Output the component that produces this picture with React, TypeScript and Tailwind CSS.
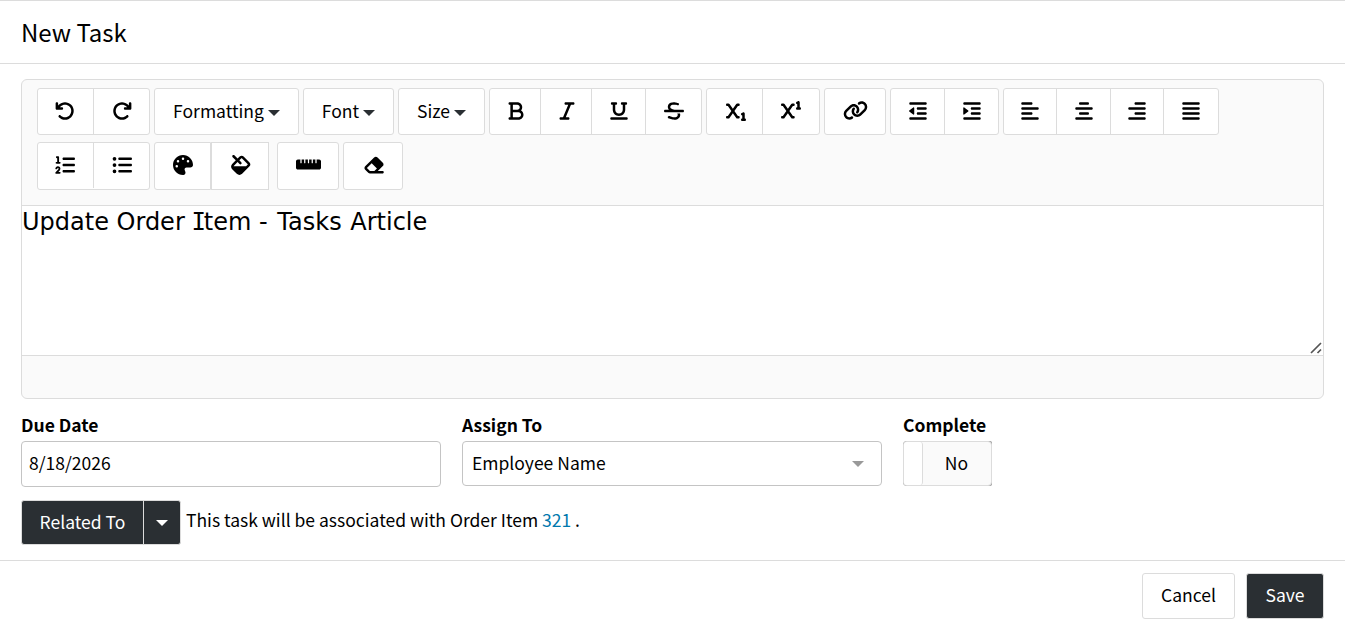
import { ReactNode } from 'react';
import {
  FaArrowRotateLeft, FaArrowRotateRight, FaBold, FaItalic, FaUnderline, FaStrikethrough, FaSubscript, FaSuperscript,
  FaLink, FaOutdent, FaIndent, FaAlignLeft, FaAlignCenter, FaAlignRight, FaAlignJustify, FaListOl, FaListUl,
  FaPalette, FaFill, FaRulerHorizontal, FaEraser,
} from 'react-icons/fa6';

function Caret({ className = 'text-[#2a2f33]' }: { className?: string }) {
  return (
    <svg viewBox="0 0 12 6" className={`h-[6px] w-[12px] shrink-0 ${className}`}>
      <path d="M0 0H12L6 6Z" fill="currentColor" />
    </svg>
  );
}

function Group({ children, className = '' }: { children: ReactNode; className?: string }) {
  return <div className={`flex divide-x divide-[#dcdcdc] overflow-hidden rounded-[3px] border border-[#dcdcdc] bg-white ${className}`}>{children}</div>;
}

function Btn({ w, children, className = '' }: { w: string; children: ReactNode; className?: string }) {
  return <button className={`flex shrink-0 items-center justify-center pb-[2px] ${w} ${className}`}>{children}</button>;
}

function MenuBtn({ label }: { label: string }) {
  return (
    <Btn w="w-full" className="gap-[4px]">
      {label}
      <Caret className="mt-[4px] text-[#2a2f33]" />
    </Btn>
  );
}

export default function App() {
  return (
    <div className="flex h-[628px] w-full flex-col bg-white font-['Noto_Sans_CJK_SC',sans-serif] text-[17.5px] leading-[24px] text-black">
      <header className="flex h-[64px] items-center border-y border-[#dcdcdc] px-[21px] pb-px text-[24px]">New Task</header>
      <main className="h-[496px] px-[21px] pt-[15px]">
        <section className="h-[320px] overflow-hidden rounded-[6px] border border-[#dcdcdc] bg-[#fafafa]">
          <div className="h-[125px] px-[15px] pt-[8px]">
            <div className="flex h-[47px] gap-[4px]">
              <Group className="w-[113px]"><Btn w="w-[56px]" className="pr-px"><FaArrowRotateLeft size={20} /></Btn><Btn w="w-[56px]" className="pr-px"><FaArrowRotateRight size={20} /></Btn></Group>
              <Group className="w-[145px]"><MenuBtn label="Formatting" /></Group>
              <Group className="w-[91px]"><MenuBtn label="Font" /></Group>
              <Group className="w-[87px]"><MenuBtn label="Size" /></Group>
              <Group className="w-[213px]"><Btn w="w-[51px]" className="pl-px"><FaBold size={20} /></Btn><Btn w="w-[51px]" className="pl-px"><FaItalic size={20} /></Btn><Btn w="w-[54px]" className="pl-px"><FaUnderline size={20} /></Btn><Btn w="w-[55px]"><FaStrikethrough size={20} /></Btn></Group>
              <Group className="w-[114px]"><Btn w="w-[56px]" className="pl-[2px]"><FaSubscript size={20} /></Btn><Btn w="w-[57px]" className="pr-px"><FaSuperscript size={20} /></Btn></Group>
              <Group className="w-[62px]"><Btn w="w-[60px]"><FaLink size={25} /></Btn></Group>
              <Group className="w-[109px]"><Btn w="w-[54px]" className="pl-px"><FaOutdent size={20} /></Btn><Btn w="w-[53px]"><FaIndent size={20} /></Btn></Group>
              <Group className="w-[216px]"><Btn w="w-[53px]"><FaAlignLeft size={20} /></Btn><Btn w="w-[54px]"><FaAlignCenter size={20} /></Btn><Btn w="w-[53px]"><FaAlignRight size={20} /></Btn><Btn w="w-[54px]"><FaAlignJustify size={20} /></Btn></Group>
            </div>
            <div className="mt-[7px] flex h-[48px]">
              <Group className="mr-[4px] w-[113px] pb-px"><Btn w="w-[56px]" className="pr-px"><FaListOl size={20} /></Btn><Btn w="w-[56px]" className="pr-px"><FaListUl size={20} /></Btn></Group>
              <Group className="w-[57px] rounded-r-none pb-px"><Btn w="w-[55px]"><FaPalette size={20} /></Btn></Group>
              <Group className="mr-[8px] w-[58px] rounded-none pb-px"><Btn w="w-[56px]" className="pl-px"><FaFill size={20} /></Btn></Group>
              <Group className="mr-[4px] w-[62px] pb-px"><Btn w="w-[60px]"><FaRulerHorizontal size={25} /></Btn></Group>
              <Group className="w-[60px] pb-px"><Btn w="w-[58px]" className="pl-px"><FaEraser size={22} /></Btn></Group>
            </div>
          </div>
          <div className="relative h-[151px] border-y border-[#dcdcdc] bg-white pt-px font-['DejaVu_Sans',Verdana,sans-serif] text-[24px] leading-[30px]">
            Update Order <span className="-mr-[2px] -ml-px font-['DejaVu_Sans_Mono',monospace]">I</span>tem <span className="mr-[2px]">-</span> Tasks <span className="ml-px">Article</span>
            <svg viewBox="0 0 12 12" className="absolute right-px bottom-[1px] size-[12px]"><path d="M1 11L11 1M7.5 11L11 7.5" stroke="#555" strokeWidth="1.7" /></svg>
          </div>
        </section>

        <div className="mt-[14px] flex">
          <div className="mr-[21px] w-[420px]">
            <div className="h-[28px] font-bold">Due Date</div>
            <div className="flex h-[46px] items-center rounded-[4px] border border-[#c4c4c4] pb-[2px] pl-[7px]">8/18/2026</div>
          </div>
          <div className="mr-[21px] w-[420px]">
            <div className="h-[28px] font-bold">Assign To</div>
            <div className="flex h-[45px] items-center justify-between rounded-[4px] border border-[#c4c4c4] pr-[17px] pb-px pl-[9px]">Employee Name<Caret className="mt-px text-[#999]" /></div>
          </div>
          <div>
            <div className="h-[28px] font-bold">Complete</div>
            <div className="w-[89px] rounded-l-[4px] rounded-r-[2px] bg-[#999]">
              <div className="flex h-[45px] rounded-[4px] border border-[#dcdcdc] bg-[#fafafa]">
                <div className="w-[19px] rounded-[3px] border-r border-[#dcdcdc] bg-white" />
                <div className="flex flex-1 items-center justify-center pr-px pb-px">No</div>
              </div>
            </div>
          </div>
        </div>

        <div className="mt-[13px] flex">
          <div className="flex h-[45px] w-[160px] divide-x divide-[#dcdcdc] rounded-[3px] border border-[#dcdcdc] bg-[#2a2f33] text-white">
            <Btn w="w-[122px]">Related To</Btn>
            <Btn w="w-[36px]"><Caret className="mt-[3px] text-white" /></Btn>
          </div>
          <div className="ml-[5px] pt-[8px]">This task will be associated with Order Item <a className="text-[#0078ad]">321</a> .</div>
        </div>
      </main>
      <footer className="flex h-[68px] justify-end border-t border-[#dcdcdc] pt-[12px] pr-[21px]">
        <button className="mr-[11px] h-[46px] w-[93px] rounded-[3px] border border-[#dcdcdc] pb-[2px]">Cancel</button>
        <button className="h-[46px] w-[78px] rounded-[3px] border border-[#dcdcdc] bg-[#2a2f33] pb-[2px] text-white">Save</button>
      </footer>
    </div>
  );
}
